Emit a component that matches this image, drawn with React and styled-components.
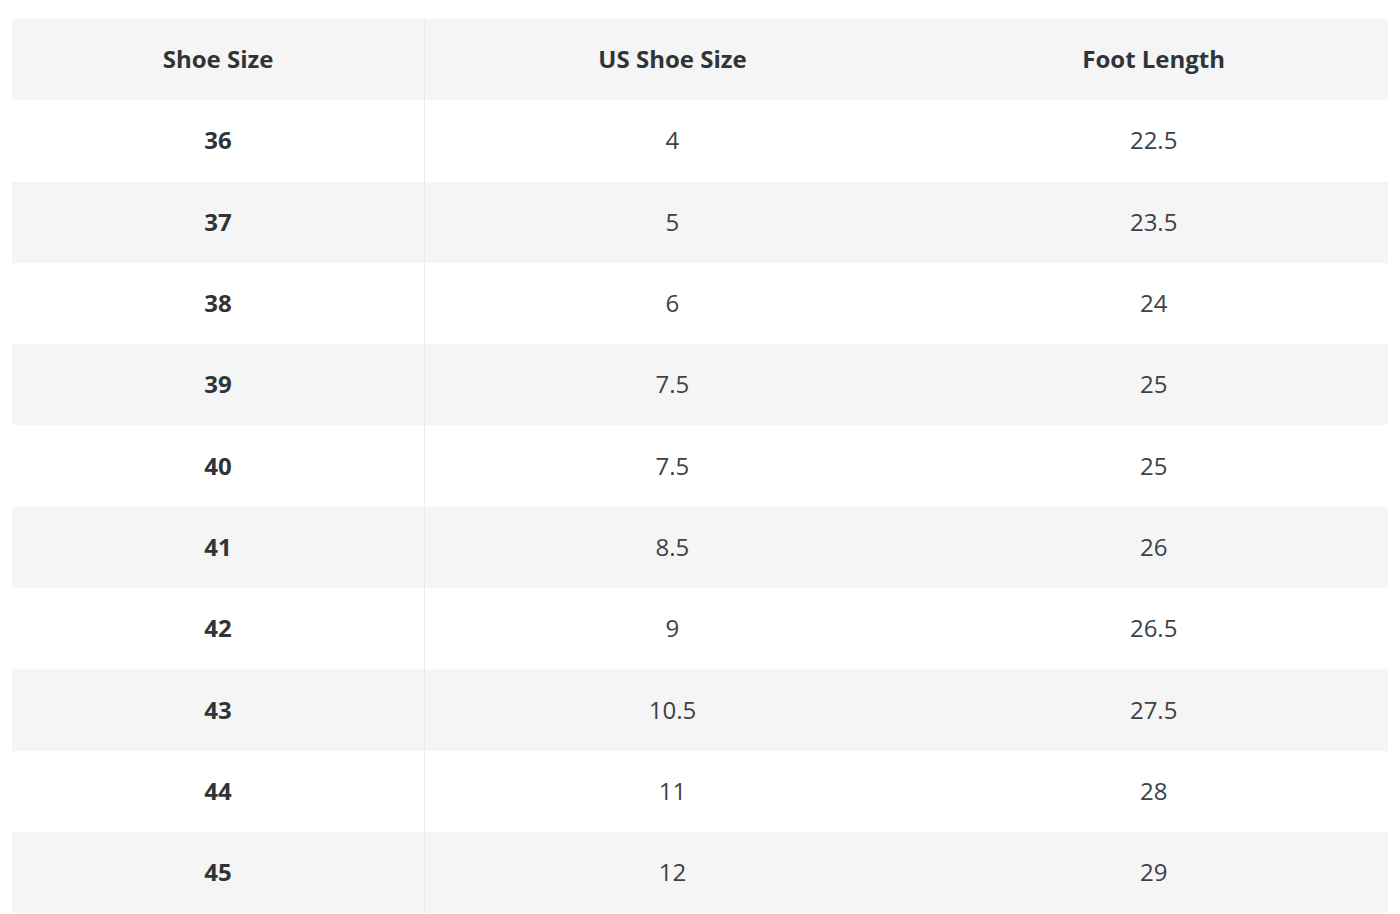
import styled, { createGlobalStyle } from 'styled-components';

const GlobalStyle = createGlobalStyle`
  body {
    margin: 0;
    padding: 19px 12px 0 12px;
    background: #ffffff;
    font-family: "Open Sans", "Noto Sans", sans-serif;
  }
`;

const rows = [
  ['36', '4', '22.5'],
  ['37', '5', '23.5'],
  ['38', '6', '24'],
  ['39', '7.5', '25'],
  ['40', '7.5', '25'],
  ['41', '8.5', '26'],
  ['42', '9', '26.5'],
  ['43', '10.5', '27.5'],
  ['44', '11', '28'],
  ['45', '12', '29'],
];

const App = () => {
  return (
    <>
      <GlobalStyle />
      <Table>
        <colgroup>
          <col style={{ width: '30%' }} />
          <col style={{ width: '36%' }} />
          <col style={{ width: '34%' }} />
        </colgroup>
        <thead>
          <Row $shaded>
            <HeadCell $divider>Shoe Size</HeadCell>
            <HeadCell>US Shoe Size</HeadCell>
            <HeadCell>Foot Length</HeadCell>
          </Row>
        </thead>
        <tbody>
          {rows.map((r, i) => (
            <Row key={r[0]} $shaded={i % 2 === 1}>
              <Cell $bold $divider>{r[0]}</Cell>
              <Cell>{r[1]}</Cell>
              <Cell>{r[2]}</Cell>
            </Row>
          ))}
        </tbody>
      </Table>
    </>
  );
};
export default App;

const Table = styled.table`
  width: 100%;
  border-collapse: collapse;
  table-layout: fixed;
`;

const Row = styled.tr`
  height: 81.3px;
  background: ${(p) => (p.$shaded ? '#f5f5f5' : '#ffffff')};
`;

const HeadCell = styled.th`
  padding: 0 0 3px;
  text-align: center;
  vertical-align: middle;
  font-size: 24px;
  font-weight: 700;
  color: #2f3438;
  border-right: ${(p) => (p.$divider ? '1px solid #ebebeb' : 'none')};
`;

const Cell = styled.td`
  padding: 0 0 2px;
  text-align: center;
  vertical-align: middle;
  font-size: 24px;
  font-weight: ${(p) => (p.$bold ? 700 : 400)};
  color: ${(p) => (p.$bold ? '#2f3438' : '#3c4246')};
  border-right: ${(p) => (p.$divider ? '1px solid #ebebeb' : 'none')};
`;
